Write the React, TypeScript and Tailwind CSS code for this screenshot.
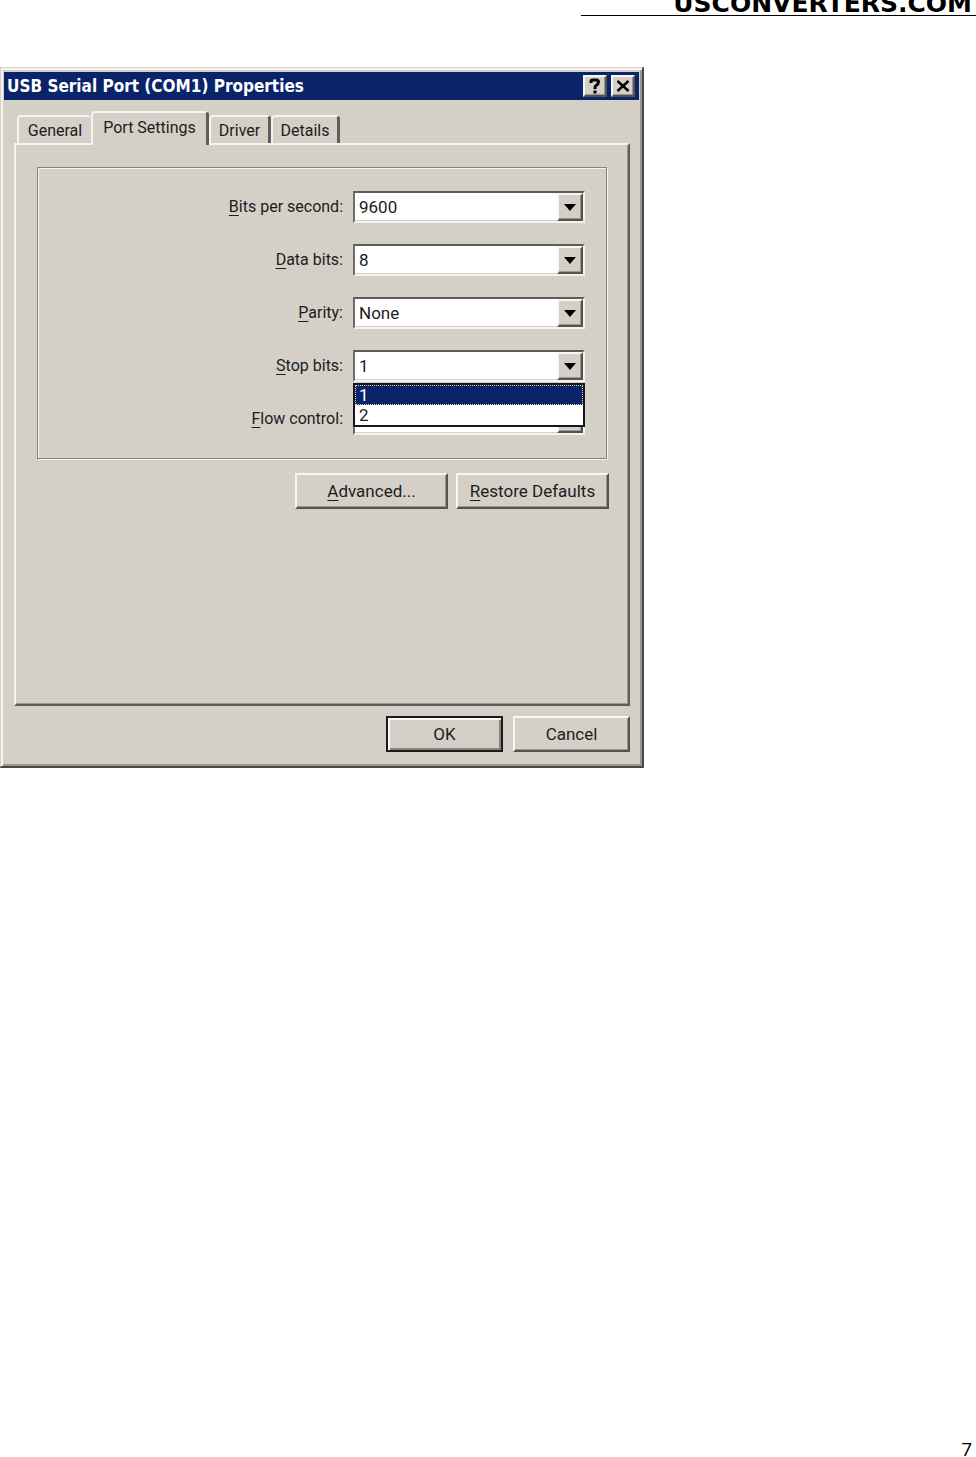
import React, { useState } from "react";

const raised =
  "bg-[#d4d0c8] border-2 border-t-[#f8f7f5] border-l-[#f8f7f5] border-r-[#55534f] border-b-[#55534f] shadow-[inset_-1px_-1px_0_#9a978f]";

const tabs = [
  { name: "General", width: "w-[74px]" },
  { name: "Port Settings", width: "w-[118px]" },
  { name: "Driver", width: "w-[62px]" },
  { name: "Details", width: "w-[69px]" },
];

interface Field {
  id: string;
  label: string;
  options: string[];
}

const fields: Field[] = [
  { id: "bits", label: "Bits per second:", options: ["9600", "19200", "38400"] },
  { id: "data", label: "Data bits:", options: ["8", "7"] },
  { id: "parity", label: "Parity:", options: ["None", "Odd", "Even"] },
  { id: "stop", label: "Stop bits:", options: ["1", "2"] },
  { id: "flow", label: "Flow control:", options: ["None", "Xon / Xoff"] },
];

function Accel({ text }: { text: string }) {
  return (
    <span className="whitespace-pre">
      <span className="underline underline-offset-3">{text[0]}</span>
      {text.slice(1)}
    </span>
  );
}

interface ComboBoxProps {
  field: Field;
  open: boolean;
  value: string;
  onChange: (v: string) => void;
}

function ComboBox({ field, open, value, onChange }: ComboBoxProps) {
  return (
    <div className="relative text-[17px]">
      <select
        id={field.id}
        value={value}
        onChange={(e) => onChange(e.target.value)}
        className="block h-8 w-full appearance-none border-2 border-t-[#5f5d59] border-l-[#6f6d69] border-r-[#f4f3f0] border-b-[#f4f3f0] bg-white pl-1 shadow-[inset_-1px_-1px_0_#d4d0c8] outline-none"
      >
        {field.options.map((o) => (
          <option key={o}>{o}</option>
        ))}
      </select>
      <span className={`pointer-events-none absolute top-0.5 right-0.5 bottom-0.5 flex w-[26px] items-center justify-center ${raised}`}>
        <svg width="12" height="7" viewBox="0 0 12 7">
          <path d="M0 0h12L6 7z" fill="#000" />
        </svg>
      </span>
      {open && (
        <ul
          role="listbox"
          aria-label={field.label}
          className="absolute top-full right-0 left-0 z-10 mt-px border-2 border-[#14171c] bg-white leading-5"
        >
          {field.options.map((o) => (
            <li
              key={o}
              role="option"
              aria-selected={o === value}
              onClick={() => onChange(o)}
              className={
                o === value
                  ? "bg-[#0a246a] pl-1 text-white outline-1 -outline-offset-1 outline-dotted outline-[#e6d9a0]"
                  : "pl-1"
              }
            >
              {o}
            </li>
          ))}
        </ul>
      )}
    </div>
  );
}

export default function App() {
  const [activeTab, setActiveTab] = useState("Port Settings");
  const [values, setValues] = useState<Record<string, string>>({
    bits: "9600",
    data: "8",
    parity: "None",
    stop: "1",
    flow: "None",
  });

  return (
    <div className="flex min-h-screen flex-col bg-white text-black">
      <header className="ml-auto flex h-4 w-[395px] items-end justify-end overflow-hidden border-b border-black pr-1 font-['DejaVu_Sans'] text-[25px] leading-[22px] font-bold">
        <span>USCONVERTERS.COM</span>
      </header>

      <main className="mt-[51px] w-full max-w-[644px] font-[Roboto,sans-serif] text-[16px] leading-5 text-[#1c1c1c]">
        <div
          role="dialog"
          aria-labelledby="dialog-title"
          className="border-t border-r-2 border-b-2 border-l border-t-[#d4d0c8] border-l-[#d4d0c8] border-r-[#4a4846] border-b-[#4a4846] bg-[#d4d0c8] shadow-[inset_2px_2px_0_#f4f3f0,inset_-2px_-2px_0_#9a978f]"
        >
          {/* Title bar */}
          <div className="mx-[3px] flex h-8 items-center gap-1 border-t-4 border-transparent bg-[#0a246a] bg-clip-padding pr-1 pl-[3px]">
            <h1
              id="dialog-title"
              className="flex-1 font-['DejaVu_Sans_Condensed','DejaVu_Sans'] text-[17px] font-bold text-white"
            >
              USB Serial Port (COM1) Properties
            </h1>
            <button type="button" aria-label="Help" className={`flex h-[22px] w-6 items-center justify-center ${raised}`}>
              <svg width="12" height="16" viewBox="0 0 12 16" fill="none" stroke="#000" strokeWidth="3">
                <path d="M2 5V3.500Q2 2 4 2h3q2.500 0 2.500 2T7 7.500Q6 8 6 11" />
                <path d="M6 12.500v3" />
              </svg>
            </button>
            <button type="button" aria-label="Close" className={`flex h-[22px] w-6 items-center justify-center ${raised}`}>
              <svg width="14" height="12" viewBox="0 0 14 12" fill="none" stroke="#000" strokeWidth="2.500">
                <path d="M1.500 1l11 10M12.500 1l-11 10" />
              </svg>
            </button>
          </div>

          <div className="pt-[11px] pr-3 pb-[14px] pl-[13px]">
            <div role="tablist" className="flex items-end pl-[3px]">
              {tabs.map(({ name, width }) => (
                <button
                  key={name}
                  type="button"
                  role="tab"
                  aria-selected={name === activeTab}
                  onClick={() => setActiveTab(name)}
                  className={`whitespace-nowrap rounded-t-sm border-t-2 border-l-2 border-t-[#f4f3f0] border-l-[#f4f3f0] ${width} ${
                    name === activeTab
                      ? "relative z-10 -mb-0.5 h-[34px] border-r-3 border-r-[#5f5d59] bg-[#d4d0c8] pb-0.5"
                      : name === "General"
                        ? "h-7 pt-0.5"
                        : "h-7 border-r-3 border-r-[#5f5d59] pt-0.5"
                  }`}
                >
                  {name}
                </button>
              ))}
            </div>

            <div
              role="tabpanel"
              className="border-2 border-t-[#f4f3f0] border-r-[#5f5d59] border-b-[#5f5d59] border-l-[#f4f3f0] px-[21px] pt-[22px] pb-[195px] shadow-[inset_-1px_-1px_0_#9a978f]"
            >
              <div className="grid grid-cols-[1fr_232px] gap-x-[10px] gap-y-[21px] border border-[#85837d] pt-[23px] pr-[21px] pb-[23px] shadow-[inset_1px_1px_0_#f4f3f0,1px_1px_0_#f4f3f0]">
                {fields.map((field) => (
                  <React.Fragment key={field.id}>
                    <label htmlFor={field.id} className="self-center text-right">
                      <Accel text={field.label} />
                    </label>
                    <ComboBox
                      field={field}
                      open={field.id === "stop"}
                      value={values[field.id]}
                      onChange={(v) => setValues({ ...values, [field.id]: v })}
                    />
                  </React.Fragment>
                ))}
              </div>

              <div className="mt-[14px] -mr-0.5 flex justify-end gap-2 text-[17px]">
                <button type="button" className={`h-9 w-[153px] ${raised}`}>
                  <Accel text="Advanced..." />
                </button>
                <button type="button" className={`h-9 w-[153px] ${raised}`}>
                  <Accel text="Restore Defaults" />
                </button>
              </div>
            </div>

            <div className="mt-[10px] flex justify-end gap-[10px] text-[17px]">
              <button
                type="button"
                className="h-9 w-[117px] border-2 border-[#1c1c1c] bg-[#d4d0c8] shadow-[inset_2px_2px_0_#f8f7f5,inset_-2px_-2px_0_#85837d]"
              >
                OK
              </button>
              <button type="button" className={`h-9 w-[117px] ${raised}`}>
                Cancel
              </button>
            </div>
          </div>
        </div>
      </main>

      <footer className="mt-auto pr-1 text-right font-['Open_Sans'] text-[19px] leading-4">7</footer>
    </div>
  );
}
